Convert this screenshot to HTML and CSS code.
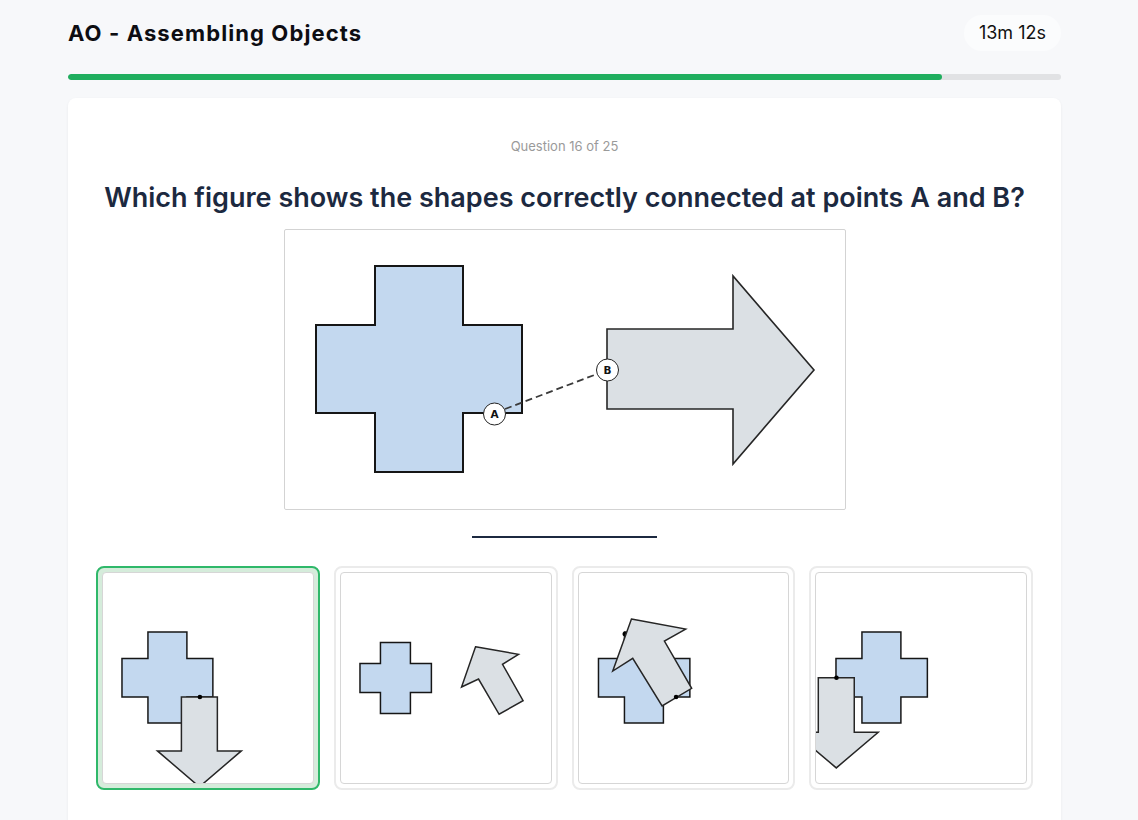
FILE: index.html
```html
<!DOCTYPE html>
<html lang="en">
<head>
<meta charset="utf-8">
<title>AO - Assembling Objects</title>
<link rel="stylesheet" href="styles.css">
</head>
<body>
<div class="page">
  <header class="topbar">
    <h1 class="title">AO - Assembling Objects</h1>
    <div class="timer">13m 12s</div>
  </header>
  <div class="progress"><div class="progress-fill" style="width: 88%"></div></div>

  <main class="card">
    <div class="qnum">Question 16 of 25</div>
    <h2 class="question">Which figure shows the shapes correctly connected at points A and B?</h2>

    <div class="figure">
      <svg class="figure-svg" viewBox="285 230 560 279" width="560" height="279">
        <path class="cross" d="M375,266 H463 V325 H522 V413 H463 V472 H375 V413 H316 V325 H375 Z"/>
        <path class="arrow" d="M607,329 H733 V276 L814,370 L733,464 V409 H607 Z"/>
        <line class="dash" x1="505" y1="409" x2="597" y2="374"/>
        <circle class="pt" cx="494.5" cy="414" r="11"/>
        <text class="pt-label" x="494.5" y="418">A</text>
        <circle class="pt" cx="607.5" cy="370" r="11"/>
        <text class="pt-label" x="607.5" y="374">B</text>
      </svg>
    </div>

    <div class="divider"></div>

    <div class="options">
      <div class="option selected">
        <svg class="opt-svg" viewBox="103 573 210 210">
          <path class="cross thin" d="M148,632 H187 V658.5 H213 V697 H187 V723 H148 V697 H122 V658.5 H148 Z"/>
          <path class="arrow thin" d="M181.5,697 H217.5 V751 H241.5 L199.5,787 L157.5,751 H181.5 Z"/>
          <circle class="dot" cx="200" cy="697" r="2.3"/>
        </svg>
      </div>
      <div class="option">
        <svg class="opt-svg" viewBox="341 573 210 210">
          <path class="cross thin" d="M380.5,642.5 H410.5 V663.5 H431.5 V692.5 H410.5 V713.5 H380.5 V692.5 H360 V663.5 H380.5 Z"/>
          <path class="arrow thin" d="M475.7,646.7 L518.7,654.3 L502.7,664.3 L523.3,700.7 L499.3,714.3 L478.7,679 L461.7,687 Z"/>
        </svg>
      </div>
      <div class="option">
        <svg class="opt-svg" viewBox="578.5 573 210 210">
          <path class="cross thin" d="M624,632 H663 V658.5 H689.5 V697 H663 V723 H624 V697 H598 V658.5 H624 Z"/>
          <circle class="dot" cx="624.3" cy="634" r="2.3"/>
          <path class="arrow thin" d="M631,619 L685.3,629 L664,641 L691.3,688.3 L661.7,706 L632.3,658.3 L612.3,671 Z"/>
          <circle class="dot" cx="675.7" cy="697" r="2.3"/>
        </svg>
      </div>
      <div class="option">
        <svg class="opt-svg" viewBox="816 573 210 210">
          <path class="cross thin" d="M862,632 H901 V658.5 H927.5 V697 H901 V723 H862 V697 H836 V658.5 H862 Z"/>
          <path class="arrow thin" d="M818.3,677.7 H854.3 V732.3 H878.3 L836.3,768 L794.3,732.3 H818.3 Z"/>
          <circle class="dot" cx="836.5" cy="677.7" r="2.3"/>
        </svg>
      </div>
    </div>
  </main>
</div>
</body>
</html>
```

FILE: styles.css
```css
* { box-sizing: border-box; }

html, body {
  margin: 0;
  padding: 0;
  background: #f7f8fa;
  font-family: "Inter", "Noto Sans", "Liberation Sans", sans-serif;
}

.page {
  width: 993px;
  margin-left: 68px;
  padding-top: 15px;
}

.topbar {
  display: flex;
  align-items: center;
  justify-content: space-between;
  height: 36px;
}

.title {
  margin: 0;
  font-size: 22px;
  font-weight: 700;
  color: #0d0d12;
  letter-spacing: 1.1px;
}

.timer {
  height: 36px;
  line-height: 36px;
  padding: 0 15px;
  border-radius: 18px;
  background: #fbfcfd;
  font-size: 18px;
  color: #111;
}

.progress {
  margin-top: 23px;
  height: 6px;
  border-radius: 3px;
  background: #e1e2e4;
  overflow: hidden;
}

.progress-fill {
  height: 100%;
  background: #1fae5e;
  border-radius: 3px;
}

.card {
  margin-top: 18px;
  background: #fff;
  border-radius: 8px;
  box-shadow: 0 1px 3px rgba(0, 0, 0, 0.06);
  padding: 38px 28px 40px;
  display: flex;
  flex-direction: column;
  align-items: center;
}

.qnum {
  font-size: 13px;
  line-height: 20px;
  color: #9a9a9a;
}

.question {
  margin: 25px 0 0;
  font-size: 27px;
  line-height: 34px;
  font-weight: 600;
  color: #1c2940;
  text-align: center;
}

.figure {
  margin-top: 14px;
  width: 562px;
  height: 281px;
  border: 1px solid #d3d3d3;
  border-radius: 2px;
  background: #fff;
}

.figure-svg { display: block; }

.cross {
  fill: #c3d8ef;
  stroke: #161616;
  stroke-width: 2;
}

.arrow {
  fill: #dbe0e4;
  stroke: #262626;
  stroke-width: 1.6;
  stroke-linejoin: miter;
}

.thin { stroke-width: 1.5; }

.dash {
  stroke: #3a3a3a;
  stroke-width: 1.8;
  stroke-dasharray: 7 4;
}

.pt {
  fill: #fff;
  stroke: #222;
  stroke-width: 1;
}

.pt-label {
  font-family: "DejaVu Sans", sans-serif;
  font-size: 10.5px;
  font-weight: 700;
  text-anchor: middle;
  fill: #111;
}

.dot { fill: #000; }

.divider {
  margin-top: 26px;
  width: 185px;
  height: 2px;
  background: #1c2940;
}

.options {
  margin-top: 28px;
  width: 100%;
  display: grid;
  grid-template-columns: repeat(4, 1fr);
  gap: 14px;
}

.option {
  height: 224px;
  border: 2px solid #ebebeb;
  border-radius: 8px;
  padding: 4px;
  background: #fff;
}

.option.selected {
  border-color: #2fb86a;
  background: #d5ecdb;
}

.opt-svg {
  display: block;
  width: 100%;
  height: 100%;
  border: 1px solid #d6d6d6;
  border-radius: 4px;
  background: #fff;
}
```
